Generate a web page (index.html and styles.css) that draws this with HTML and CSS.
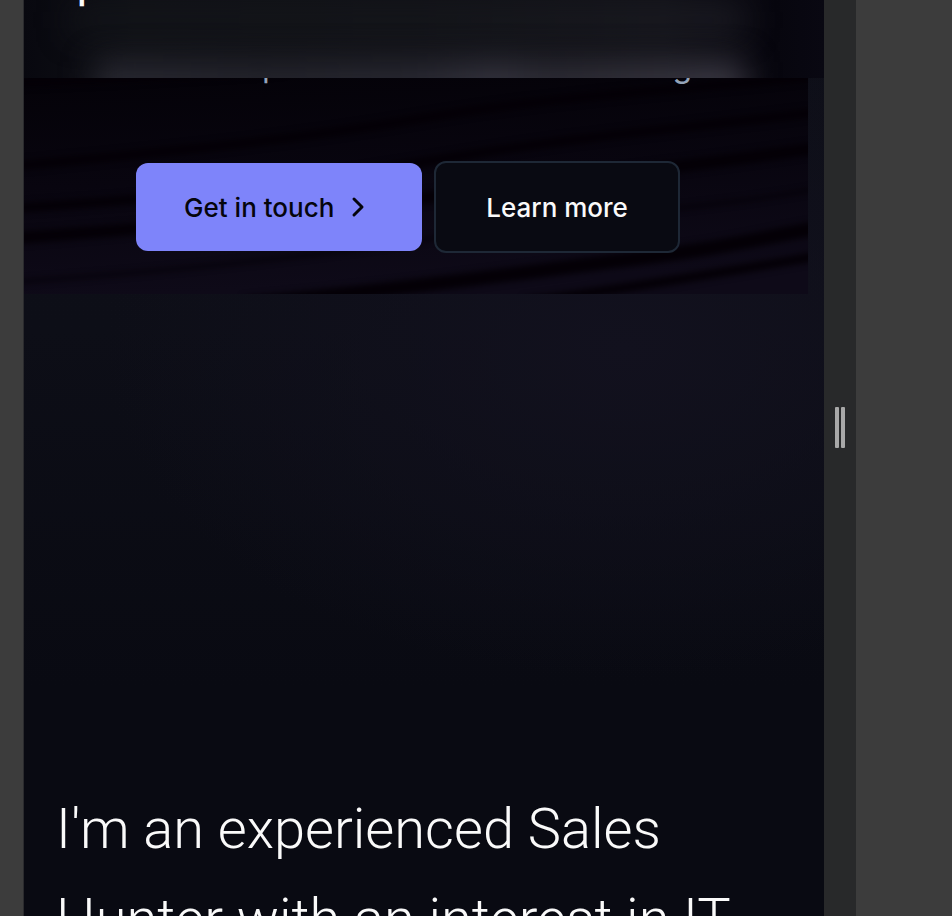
FILE: index.html
```html
<!DOCTYPE html>
<html lang="en">
<head>
<meta charset="utf-8">
<title>Sales portfolio</title>
<link rel="stylesheet" href="styles.css">
</head>
<body>
<div class="workspace">
  <main class="screen">
    <header class="glass">
      <div class="smear smear-top"></div>
      <div class="smear smear-bottom"></div>
      <span class="glass-text">p</span>
    </header>
    <section class="hero">
      <svg class="waves" viewBox="0 0 784 216" preserveAspectRatio="none" aria-hidden="true">
        <defs>
          <linearGradient id="base" x1="0" y1="0" x2="0.15" y2="1">
            <stop offset="0" stop-color="#040208"/>
            <stop offset="0.5" stop-color="#08050f"/>
            <stop offset="1" stop-color="#0e0a18"/>
          </linearGradient>
          <filter id="soft" x="-5%" y="-20%" width="110%" height="140%" color-interpolation-filters="sRGB"><feGaussianBlur stdDeviation="3"/></filter>
        </defs>
        <rect width="784" height="216" fill="url(#base)"/>
        <g fill="none" stroke="#040006" filter="url(#soft)">
          <path stroke-width="8" d="M-10 5Q120 0 260-8"/>
          <path stroke-width="9" d="M-10 88C160 72 270 62 400 40S650 12 794-2"/>
          <path stroke-width="9" d="M-10 130C180 119 290 102 430 79S650 52 794 34"/>
          <path stroke-width="12" d="M-10 160C180 147 290 134 430 116S650 90 794 70"/>
          <path stroke-width="3" d="M-10 204C150 193 300 178 430 157S660 134 794 111"/>
          <path stroke-width="14" d="M220 226C410 208 500 194 600 182S720 163 794 150"/>
          <path stroke-width="9" d="M500 224C610 210 700 194 794 178"/>
        </g>
      </svg>
      <p class="intro"><span>p</span><span>g</span></p>
      <div class="actions">
        <button class="btn btn-primary" type="button">Get in touch
          <svg class="chevron" viewBox="0 0 32 32" aria-hidden="true"><path d="M12 8L20 16L12 24"/></svg>
        </button>
        <button class="btn btn-outline" type="button">Learn more</button>
      </div>
    </section>
    <section class="about">
      <h2>I'm an experienced Sales<br>Hunter with an interest in IT</h2>
    </section>
  </main>
  <div class="resizer"><span></span><span></span></div>
</div>
</body>
</html>
```
FILE: styles.css
```css
* { box-sizing: border-box; }

body {
  margin: 0;
  background: #3c3c3c;
  font-family: Inter, "Liberation Sans", sans-serif;
}

.workspace {
  display: flex;
  height: 100vh;
  padding: 0 96px 0 24px;
  overflow: hidden;
}

.screen {
  flex: 1;
  min-width: 0;
  overflow: hidden;
  color: #fafafa;
  background:
    radial-gradient(ellipse 65% 36% at 75% 38%, #12111e, transparent),
    linear-gradient(#0e0f18 0, #0d0e17 36%, #090a12 75%);
  box-shadow: -1px 0 #2b2b2e;
}

.glass {
  position: relative;
  height: 78px;
  padding-left: 52px;
  overflow: hidden;
  background: linear-gradient(90deg, #08080f, #101116 14%, #121218 80%, #07060e 94%, #090812);
}

.glass-text {
  position: relative;
  display: block;
  margin-top: -48px;
  font-size: 48px;
  line-height: 56px;
}

.smear {
  position: absolute;
  left: 6%;
  right: 10%;
  filter: blur(16px);
}

.smear-top {
  top: 8px;
  height: 24px;
  background: linear-gradient(90deg, #121419, #15171b 50%, #1d1d25);
}

.smear-bottom {
  left: 9%;
  bottom: -32px;
  height: 48px;
  background: linear-gradient(90deg, #2a2a33, #24242c 25%, #292932 50%, #35343f 62%, #2c2b34 70%, #3b3944);
}

.hero {
  position: relative;
  margin-right: 16px;
  padding: 0 16px 41px 0;
  overflow: hidden;
}

.waves {
  position: absolute;
  inset: 0;
  width: 100%;
  height: 100%;
}

.intro {
  position: relative;
  display: flex;
  justify-content: space-between;
  width: 56%;
  margin: -36px 13% 0 auto;
  font-size: 32px;
  line-height: 48px;
  color: #94a3b8;
}

.actions {
  position: relative;
  display: flex;
  justify-content: center;
  align-items: center;
  gap: 12px;
  padding-top: 71px;
}

.btn {
  display: flex;
  align-items: center;
  gap: 8px;
  height: 88px;
  padding: 0 48px;
  border: 0;
  border-radius: 12px;
  font-family: inherit;
  font-size: 26px;
  font-weight: 500;
}

.btn-primary { background: #7e84fa; color: #05050c; }

.btn-outline {
  height: 92px;
  padding: 0 50px;
  border: 2px solid #1e2836;
  background: #090a12;
  color: #fafafa;
}

.chevron {
  width: 32px;
  height: 32px;
  fill: none;
  stroke: currentColor;
  stroke-width: 3;
  stroke-linecap: round;
  stroke-linejoin: round;
}

.about { padding: 490px 32px 0; }

h2 {
  margin: 0;
  font-family: Roboto, sans-serif;
  font-size: 56px;
  font-weight: 300;
  line-height: 90px;
  white-space: nowrap;
}

.resizer {
  display: flex;
  justify-content: center;
  gap: 2px;
  width: 32px;
  padding-top: 407px;
  background: #28292a;
}

.resizer span {
  width: 4px;
  height: 41px;
  border-radius: 1px;
  background: #a8a8a8;
}
```
